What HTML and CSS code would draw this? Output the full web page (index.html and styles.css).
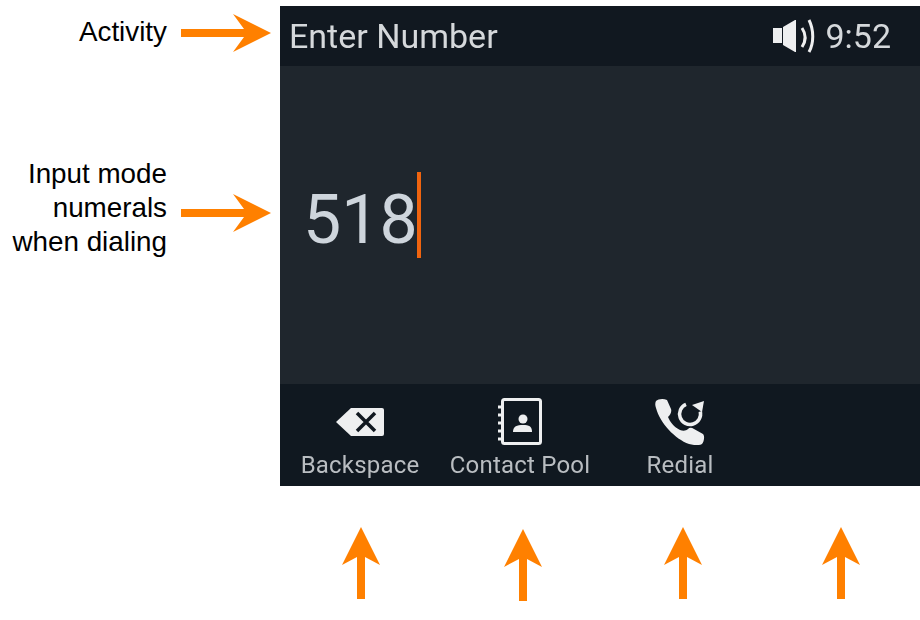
FILE: index.html
```html
<!DOCTYPE html>
<html lang="en">
<head>
<meta charset="utf-8">
<title>Enter Number</title>
<link rel="stylesheet" href="styles.css">
</head>
<body>
<main class="diagram">
  <div class="notes">
    <div class="note note-activity">
      <p class="note-text">Activity</p>
      <svg class="arrow-right" viewBox="0 0 90 38"><path d="M0 15h63L52 0l38 19-38 19 11-15H0z"/></svg>
    </div>
    <div class="note note-input">
      <p class="note-text">Input mode<br>numerals<br>when dialing</p>
      <svg class="arrow-right" viewBox="0 0 90 38"><path d="M0 15h63L52 0l38 19-38 19 11-15H0z"/></svg>
    </div>
  </div>
  <section class="screen">
    <header class="status">
      <span class="activity">Enter Number</span>
      <div class="status-right">
        <svg class="speaker" viewBox="0 0 42 34">
          <path class="fill" d="M0 9h9v15H0z"/>
          <path class="fill" d="M10 8l12-7h1v32h-1l-12-7z"/>
          <path class="line" d="M29 9c4 6 4 13 0 19"/>
          <path class="line" d="M36 1c5 10 5 23 0 32"/>
        </svg>
        <span class="clock">9:52</span>
      </div>
    </header>
    <div class="entry">
      <span class="digits">518</span><span class="caret"></span>
    </div>
    <footer class="softkeys">
      <div class="softkey">
        <svg class="icon" viewBox="0 0 60 50">
          <path class="fill" d="M21 13h31a2 2 0 0 1 2 2v24a2 2 0 0 1-2 2H21L6 27z"/>
          <path class="cut" d="M27 18l18 18M45 18L27 36"/>
        </svg>
        <span class="key-label">Backspace</span>
      </div>
      <div class="softkey">
        <svg class="icon" viewBox="0 0 60 50">
          <rect class="line" x="12.500" y="4.500" width="38" height="44" rx="2"/>
          <path class="line" d="M8 12h6M8 20h6M8 28h6M8 36h6M8 44h6"/>
          <circle class="fill" cx="33" cy="24" r="4.500"/>
          <path class="fill" d="M23 37c0-6 4-7 10-7s9 1 9 7z"/>
        </svg>
        <span class="key-label">Contact Pool</span>
      </div>
      <div class="softkey">
        <svg class="icon" viewBox="0 0 60 50">
          <path class="fill" d="M6 6C8 4 13 3 17 5l4 9c1 3-1 6-3 8 2 5 6 10 12 13 3 1 6 1 8-1 2-2 4-1 6 0l9 5c2 2 1 8-1 10-4 2-9 1-13 0C25 44 10 28 6 13 5 10 5 8 6 6z"/>
          <path class="line ring" d="M36 9.300A10.500 10.500 0 1 0 50.300 16.500"/>
          <path class="fill" d="M42 10l12-4-2 11z"/>
        </svg>
        <span class="key-label">Redial</span>
      </div>
      <div class="softkey"></div>
    </footer>
  </section>
  <div class="pointers">
    <svg class="arrow-up near" viewBox="0 0 38 72"><path d="M19 0l19 38-15-8v42h-8V30L0 38z"/></svg>
    <svg class="arrow-up far low" viewBox="0 0 38 72"><path d="M19 0l19 38-15-8v42h-8V30L0 38z"/></svg>
    <svg class="arrow-up far" viewBox="0 0 38 72"><path d="M19 0l19 38-15-8v42h-8V30L0 38z"/></svg>
    <svg class="arrow-up near" viewBox="0 0 38 72"><path d="M19 0l19 38-15-8v42h-8V30L0 38z"/></svg>
  </div>
</main>
</body>
</html>
```
FILE: styles.css
```css
* { box-sizing: border-box; }
html, body { margin: 0; padding: 0; background: #fff; }
body { width: 920px; height: 620px; overflow: hidden; padding-top: 6px; }
.diagram {
  display: grid;
  grid-template-columns: 280px 640px;
  grid-template-rows: 480px auto;
}
.notes { display: flex; flex-direction: column; padding-right: 9px; }
.note { display: flex; justify-content: flex-end; gap: 14px; }
.note-activity { height: 54px; align-items: center; }
.note-activity .note-text { padding-bottom: 2px; }
.note-input { height: 102px; margin-top: 97px; }
.note-input .arrow-right { margin-top: 37px; }
.note-text {
  margin: 0;
  font: 27.800px/34px "Liberation Sans", Arial, sans-serif;
  color: #000;
  text-align: right;
}
.arrow-right { width: 90px; height: 38px; flex: none; fill: #ff8000; }
.screen {
  display: flex;
  flex-direction: column;
  background: #1f262d;
  font-family: Roboto, sans-serif;
}
.status {
  height: 60px;
  padding: 0 29px 0 9px;
  display: flex;
  align-items: center;
  justify-content: space-between;
  background: #111820;
  color: #d5d8db;
  font-size: 34px;
}
.activity, .clock, .digits, .key-label { filter: blur(0.6px); }
.status-right { display: flex; align-items: center; gap: 10px; }
.speaker, .icon { filter: blur(0.5px); }
.speaker { width: 42px; height: 34px; }
.fill { fill: #eeeff0; stroke: none; }
.line { fill: none; stroke: #eeeff0; stroke-width: 3; }
.ring { stroke-width: 3.500; }
.cut { fill: none; stroke: #111820; stroke-width: 3.500; }
.entry {
  flex: 1;
  display: flex;
  align-items: center;
  padding: 0 0 20px 23px;
}
.digits { font-size: 68px; line-height: 86px; padding-top: 10px; color: #ced5dc; }
.caret { width: 4px; height: 86px; background: #f0640f; margin-left: -1px; }
.softkeys {
  height: 102px;
  display: grid;
  grid-template-columns: repeat(4, 160px);
  background: #101820;
}
.softkey { display: flex; flex-direction: column; align-items: center; padding-top: 11px; }
.icon { width: 60px; height: 50px; }
.key-label { font-size: 24px; line-height: 32px; margin-top: 4px; color: #b9bdc1; letter-spacing: 0.2px; }
.pointers {
  grid-column: 2;
  display: grid;
  grid-template-columns: repeat(4, 160px);
  justify-items: center;
  padding-top: 41px;
}
.arrow-up { width: 38px; height: 72px; fill: #ff8000; }
.arrow-up.near { margin-left: 2px; }
.arrow-up.far { margin-left: 6px; }
.arrow-up.low { margin-top: 2px; }
```
